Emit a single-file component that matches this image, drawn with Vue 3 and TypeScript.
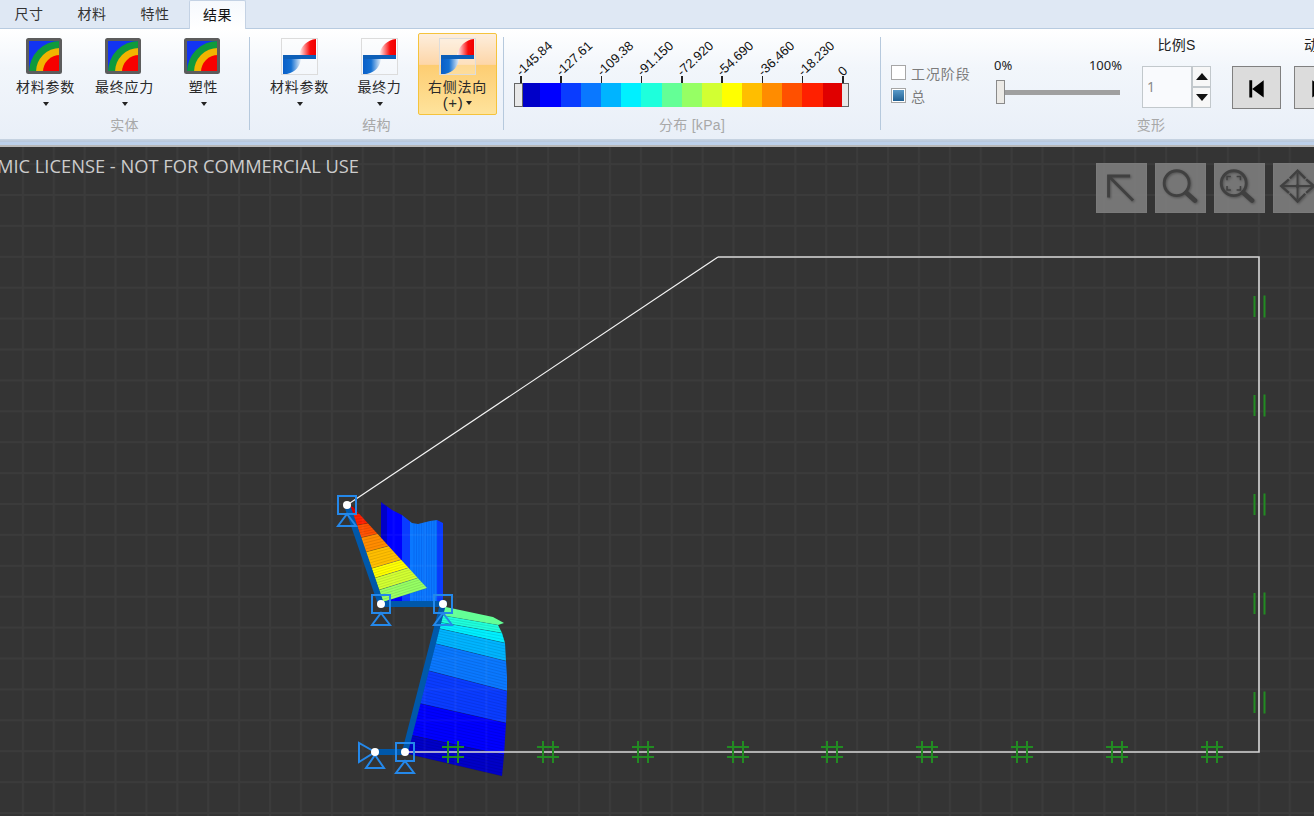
<script setup lang="ts">
type P = [number, number]
interface Band { l1: P; r1: P; l2: P; r2: P; color: string; extra?: P[] }

const tabs = ['尺寸', '材料', '特性', '结果']
const solidButtons = ['材料参数', '最终应力', '塑性']

const scaleColors = ['#0000c8', '#0000ff', '#0a3cff', '#0a78ff', '#00b4ff', '#00f0ff', '#1effdc', '#64ff96', '#96ff64', '#d2ff32', '#ffff00', '#ffbe00', '#ff8c00', '#ff5000', '#ff2000', '#e00000']
const scaleWidths = [17.3, 20.3, 20.4, 20, 20, 20.3, 20.3, 20, 20, 20.4, 20, 20.3, 20, 20, 20.3, 19.7]
const scaleTicks = ['-145.84', '-127.61', '-109.38', '-91.150', '-72.920', '-54.690', '-36.460', '-18.230', '0']

const pts = (a: P[]) => a.map((p) => p.join(',')).join(' ')
const lerp = (a: P, b: P, t: number): P => [a[0] + (b[0] - a[0]) * t, a[1] + (b[1] - a[1]) * t]

function stripes(bands: Band[], step: number) {
  const out: { a: P; b: P }[] = []
  for (const band of bands) {
    const len = Math.hypot(band.r2[0] - band.r1[0], band.r2[1] - band.r1[1])
    const n = Math.max(1, Math.round(len / step))
    for (let i = 0; i <= n; i++) {
      out.push({ a: lerp(band.l1, band.l2, i / n), b: lerp(band.r1, band.r2, i / n) })
    }
  }
  return out
}

const upperColors = ['#e00000', '#ff2000', '#ff5000', '#ff8c00', '#ffbe00', '#ffff00', '#d2ff32', '#96ff64']
const upperStops = [0, 0.08, 0.2, 0.33, 0.48, 0.65, 0.75, 0.875, 1]
const upperLeft = (t: number) => lerp([350, 506], [383, 602], t)
const upperRight = (t: number) => lerp([353, 507], [427, 588], t)
const upperBands: Band[] = upperColors.map((color, i) => ({
  color,
  l1: upperLeft(upperStops[i]),
  r1: upperRight(upperStops[i]),
  l2: upperLeft(upperStops[i + 1]),
  r2: upperRight(upperStops[i + 1]),
}))

const lowerBands: Band[] = [
  { color: '#64ff96', l1: [441, 606], r1: [493, 617], l2: [440, 615], r2: [498, 625], extra: [[504, 623]] },
  { color: '#1effdc', l1: [440, 615], r1: [498, 625], l2: [438.4, 622], r2: [502, 633] },
  { color: '#00f0ff', l1: [438.4, 622], r1: [502, 633], l2: [437, 628], r2: [505, 643] },
  { color: '#00b4ff', l1: [437, 628], r1: [505, 643], l2: [433, 643], r2: [506, 661] },
  { color: '#0a78ff', l1: [433, 643], r1: [506, 661], l2: [426, 670], r2: [507, 691], extra: [[507, 677]] },
  { color: '#0a3cff', l1: [426, 670], r1: [507, 691], l2: [418, 703], r2: [506, 723] },
  { color: '#0000ff', l1: [418, 703], r1: [506, 723], l2: [410, 735], r2: [504, 755] },
  { color: '#0000c8', l1: [410, 735], r1: [504, 755], l2: [408, 754], r2: [502, 776] },
]

const bandPoly = (b: Band) => pts([b.l1, b.r1, ...(b.extra ?? []), b.r2, b.l2])
const upperStripes = stripes(upperBands, 3)
const lowerStripes = stripes(lowerBands.slice(1), 3)

const backStrips = [
  { color: '#0000c8', x: 381, w: 6 },
  { color: '#0000ff', x: 387, w: 15 },
  { color: '#0a3cff', x: 402, w: 8 },
  { color: '#0a78ff', x: 410, w: 27 },
  { color: '#0a3cff', x: 437, w: 6 },
]
const backOutline: P[] = [[381, 502], [392, 510], [402, 515], [412, 523], [418, 524], [430, 521], [437, 520], [443, 523], [443, 602], [381, 602]]
const backLines = Array.from({ length: 11 }, (_, i) => 414 + i * 2.5)

const hashX = [453, 548, 643, 738, 832, 927, 1022, 1117, 1212]
const pairY = [306.5, 405.5, 504.5, 603.5, 702.5]
const nodes: P[] = [[347, 505], [381, 604], [443, 604], [405, 752]]
</script>

<template>
  <div class="app">
    <nav class="tabs">
      <div v-for="(t, i) in tabs" :key="t" class="tab" :class="{ active: i === 3 }">{{ t }}</div>
    </nav>

    <section class="ribbon">
      <div class="group group-solid">
        <div class="group-body">
          <div v-for="b in solidButtons" :key="b" class="rbtn">
            <svg class="ico ico-solid" viewBox="0 0 36 36" width="36" height="36">
              <rect x="1.5" y="1.5" width="33" height="33" fill="#1234f2" />
              <clipPath id="clipSolid"><rect x="1.5" y="1.5" width="33" height="33" /></clipPath>
              <g clip-path="url(#clipSolid)">
                <circle cx="34" cy="34" r="31" fill="#0f9a3c" />
                <circle cx="34" cy="34" r="24" fill="#f2b400" />
                <circle cx="34" cy="34" r="17" fill="#f70000" />
              </g>
              <rect x="1.5" y="1.5" width="33" height="33" fill="none" stroke="#5c5c5c" stroke-width="3" rx="1" />
            </svg>
            <span class="rlabel">{{ b }}</span>
            <i class="caret"></i>
          </div>
        </div>
        <div class="group-label">实体</div>
      </div>
      <div class="sep"></div>

      <div class="group group-struct">
        <div class="group-body">
          <div v-for="(b, i) in ['材料参数', '最终力', '右侧法向']" :key="b" class="rbtn" :class="{ hot: i === 2 }">
            <svg class="ico" viewBox="0 0 37 37" width="37" height="37">
              <defs>
                <linearGradient id="gRed" x1="0" x2="1" y1="0" y2="0">
                  <stop offset="0" stop-color="#fff" />
                  <stop offset="0.65" stop-color="#fa0a0a" />
                  <stop offset="1" stop-color="#f00000" />
                </linearGradient>
                <linearGradient id="gBlue" x1="0" x2="1" y1="0" y2="0">
                  <stop offset="0" stop-color="#0a5fc8" />
                  <stop offset="0.45" stop-color="#1470d2" />
                  <stop offset="1" stop-color="#e8f0f8" />
                </linearGradient>
              </defs>
              <rect x="0.5" y="0.5" width="36" height="36" fill="#fff" fill-opacity="0.25" stroke="#dcdcdc" />
              <path d="M18 17C20 8 26 2 35 1V17Z" fill="url(#gRed)" />
              <path d="M2 21H20C19 28 15 34 6 36H2Z" fill="url(#gBlue)" />
              <rect x="2" y="17" width="33" height="4" fill="#0d5fb8" />
            </svg>
            <span class="rlabel">{{ b }}</span>
            <span v-if="i === 2" class="rlabel plus">(+)<i class="caret inline"></i></span>
            <i v-else class="caret"></i>
          </div>
        </div>
        <div class="group-label">结构</div>
      </div>
      <div class="sep"></div>

      <div class="group group-scale">
        <div class="scale">
          <i class="handle"></i>
          <div class="bar">
            <i v-for="(c, i) in scaleColors" :key="c" class="seg" :style="{ background: c, width: scaleWidths[i] + 'px' }"></i>
            <div
              v-for="(t, i) in scaleTicks"
              :key="t"
              class="tick"
              :style="{ left: i * 40.25 - 3 + 'px' }"
            >
              <span class="tick-text">{{ t }}</span>
            </div>
          </div>
          <i class="handle"></i>
        </div>
        <div class="group-label">分布 [kPa]</div>
      </div>
      <div class="sep"></div>

      <div class="group group-deform">
        <div class="deform-body">
          <div class="checks">
            <label class="check"><i class="box"></i>工况阶段</label>
            <label class="check"><i class="box on"></i>总</label>
          </div>
          <div class="slider">
            <div class="slider-labels"><span>0%</span><span>100%</span></div>
            <div class="track"><i class="thumb"></i></div>
          </div>
          <div class="spin-col">
            <div class="col-title">比例S</div>
            <div class="spin">
              <div class="spin-input">1</div>
              <div class="spin-btns">
                <div class="spin-btn"><svg width="12" height="7" viewBox="0 0 12 7"><path d="M6 0L12 7H0Z" fill="#111" /></svg></div>
                <div class="spin-btn"><svg width="12" height="7" viewBox="0 0 12 7"><path d="M0 0H12L6 7Z" fill="#111" /></svg></div>
              </div>
            </div>
          </div>
          <div class="anim-col">
            <div class="col-title anim-title">动画</div>
            <div class="anim-btns">
              <div class="anim-btn"><svg width="49" height="43" viewBox="0 0 49 43"><path d="M17 14H20V32H17ZM20 23L32 14V32Z" fill="#000" /></svg></div>
              <div class="anim-btn"><svg width="49" height="43" viewBox="0 0 49 43"><path d="M18 14L31 23L18 32Z" fill="#000" /></svg></div>
            </div>
          </div>
        </div>
        <div class="group-label">变形</div>
      </div>
    </section>

    <div class="divider"></div>

    <main class="canvas">
      <svg class="scene" width="1314" height="669" viewBox="0 147 1314 669">
        <defs>
          <pattern id="grid" width="30.9" height="30.9" patternUnits="userSpaceOnUse" x="21.8" y="8.6">
            <path d="M0 1H30.9M1 0V30.9" fill="none" stroke="#fff" stroke-opacity="0.035" stroke-width="2" />
          </pattern>
          <clipPath id="backClip"><polygon :points="pts(backOutline)" /></clipPath>
        </defs>
        <rect x="0" y="147" width="1314" height="669" fill="#343434" />

        <!-- stress diagrams -->
        <g clip-path="url(#backClip)">
          <rect v-for="s in backStrips" :key="s.x" :x="s.x" y="500" :width="s.w" height="104" :fill="s.color" />
          <line v-for="x in backLines" :key="x" :x1="x" :x2="x" y1="515" y2="604" stroke="#003cc8" stroke-opacity="0.35" stroke-width="0.7" />
        </g>
        <polygon v-for="b in upperBands" :key="b.color" :points="bandPoly(b)" :fill="b.color" />
        <line v-for="(s, i) in upperStripes" :key="'u' + i" :x1="s.a[0]" :y1="s.a[1]" :x2="s.b[0]" :y2="s.b[1]" stroke="#000" stroke-opacity="0.14" stroke-width="0.7" />
        <polygon v-for="b in lowerBands" :key="b.color" :points="bandPoly(b)" :fill="b.color" />
        <line v-for="(s, i) in lowerStripes" :key="'l' + i" :x1="s.a[0]" :y1="s.a[1]" :x2="s.b[0]" :y2="s.b[1]" stroke="#000" stroke-opacity="0.14" stroke-width="0.7" />

        <rect x="0" y="147" width="1314" height="669" fill="url(#grid)" />

        <!-- model outline -->
        <line x1="347" y1="505" x2="718" y2="257" stroke="#f4f4f4" stroke-width="1.2" />
        <polyline points="718,257 1259,257 1259,752 405,752" fill="none" stroke="#d8d8d8" stroke-width="1.6" />

        <!-- structural members -->
        <polyline points="347,505 381,604 443,604 405,752 375,752" fill="none" stroke="#0058aa" stroke-width="6" stroke-linejoin="miter" />

        <!-- fixity marks -->
        <g stroke="#228b22" stroke-width="2" fill="none">
          <g v-for="x in hashX" :key="x">
            <path :d="`M${x - 5} 741V763M${x + 5} 741V763M${x - 11} 747H${x + 11}M${x - 11} 757H${x + 11}`" />
          </g>
          <g v-for="y in pairY" :key="y">
            <path :d="`M1254.5 ${y - 10.5}V${y + 10.5}M1264.5 ${y - 11}V${y + 11}`" />
          </g>
        </g>

        <!-- supports -->
        <g fill="none" stroke="#2488ea" stroke-width="2">
          <g v-for="n in nodes" :key="n[0]">
            <rect :x="n[0] - 9" :y="n[1] - 9" width="18" height="18" />
            <path :d="`M${n[0]} ${n[1] + 9}L${n[0] + 9} ${n[1] + 21}H${n[0] - 9}Z`" />
          </g>
          <path d="M375 752L359 743V762Z" />
          <path d="M375 755L384 768H366Z" />
        </g>
        <g fill="#fff">
          <circle v-for="n in nodes" :key="'d' + n[0]" :cx="n[0]" :cy="n[1]" r="4" />
          <circle cx="375" cy="752" r="4" />
        </g>
      </svg>

      <div class="license">MIC LICENSE - NOT FOR COMMERCIAL USE</div>

      <div class="nav">
        <div class="nav-btn">
          <svg width="49" height="48" viewBox="0 0 50 50"><path d="M11.5 35V12.5H34M12 13L37 38" fill="none" stroke="#404040" stroke-width="3" /></svg>
        </div>
        <div class="nav-btn">
          <svg width="49" height="48" viewBox="0 0 50 50"><circle cx="21" cy="20" r="13" fill="none" stroke="#404040" stroke-width="3" /><path d="M31 30L40 38" stroke="#404040" stroke-width="5" stroke-linecap="round" /></svg>
        </div>
        <div class="nav-btn">
          <svg width="49" height="48" viewBox="0 0 50 50"><circle cx="19" cy="20" r="13" fill="none" stroke="#404040" stroke-width="3" /><path d="M12 17V13H16M22 13H26V17M26 23V27H22M16 27H12V23" fill="none" stroke="#404040" stroke-width="1.6" /><path d="M29 30L38 38" stroke="#404040" stroke-width="5" stroke-linecap="round" /></svg>
        </div>
        <div class="nav-btn">
          <svg width="49" height="48" viewBox="0 0 50 50"><path d="M16 15L24 7L32 15M32 31L24 39L16 31M15 16L7 23L15 30M33 16L41 23L33 30" fill="none" stroke="#404040" stroke-width="2.5" /><path d="M24 9V37M9 23H39" stroke="#404040" stroke-width="2" /><circle cx="24" cy="23" r="2" fill="#404040" /></svg>
        </div>
      </div>
    </main>
  </div>
</template>

<style scoped>
.app {
  position: relative;
  width: 1314px;
  height: 816px;
  overflow: hidden;
  display: flex;
  flex-direction: column;
  font-family: "Liberation Sans", "Noto Sans CJK SC", sans-serif;
  font-size: 14px;
  color: #222;
  background: #333;
}
.tabs {
  flex: none;
  height: 29px;
  box-sizing: border-box;
  padding-left: 1px;
  display: flex;
  gap: 7px;
  background: #dfe8f4;
  border-bottom: 1px solid #b8cbe0;
}
.tab {
  width: 56px;
  height: 28px;
  box-sizing: border-box;
  text-align: center;
  line-height: 29px;
  font-size: 14px;
  color: #333;
  letter-spacing: 0.5px;
}
.tab.active {
  color: #111;
  width: 57px;
  margin-left: -1px;
  background: linear-gradient(#f6f9fd, #fff);
  border: 1px solid #c4d2e4;
  border-bottom: none;
  border-radius: 2px 2px 0 0;
  line-height: 28px;
  height: 29px;
  position: relative;
  z-index: 1;
}
.ribbon {
  flex: none;
  height: 110px;
  display: flex;
  background: linear-gradient(#ffffff, #f2f6fb 35%, #e9eff8);
}
.sep {
  flex: none;
  width: 1px;
  height: 93px;
  margin-top: 8px;
  background: #b6c9dd;
}
.group {
  flex: none;
  display: flex;
  flex-direction: column;
  position: relative;
}
.group-solid { width: 249px; padding-left: 6px; box-sizing: border-box; }
.group-struct { width: 253px; padding-left: 10px; box-sizing: border-box; }
.group-scale { width: 376px; padding-left: 10px; box-sizing: border-box; }
.group-deform { width: 540px; padding-left: 10px; box-sizing: border-box; }
.group-body {
  display: flex;
  height: 82px;
  margin-top: 4px;
}
.group-label {
  position: absolute;
  left: 0;
  right: 0;
  top: 86px;
  height: 20px;
  line-height: 20px;
  text-align: center;
  color: #a8a8a8;
  font-size: 14px;
  letter-spacing: 0.3px;
}
.rbtn {
  flex: none;
  width: 79px;
  height: 82px;
  box-sizing: border-box;
  border: 1px solid transparent;
  border-radius: 2px;
  padding-top: 4px;
  display: flex;
  flex-direction: column;
  align-items: center;
}
.group-struct .rbtn:nth-child(2) { margin-left: 1px; }
.group-struct .rbtn:nth-child(3) { margin-left: -1px; }
.rbtn.hot {
  border-color: #f5c33c;
  background: linear-gradient(#fdeedd, #fdd6a8 38%, #fdcd72 39%, #fee39c);
}
.ico { flex: none; display: block; }
.ico-solid { margin-right: 3px; }
.rlabel {
  margin-top: 3px;
  line-height: 20px;
  height: 20px;
  letter-spacing: 0.7px;
  white-space: nowrap;
  color: #2a2a2a;
}
.group-struct .rlabel { margin-top: 2px; }
.group-struct .hot .rlabel {
  margin-top: 4px;
  height: 16px;
  line-height: 16px;
}
.group-struct .hot .rlabel.plus {
  margin-top: 0;
  letter-spacing: 0.6px;
  font-size: 15px;
  display: flex;
  align-items: center;
  gap: 3px;
}
.caret {
  display: block;
  width: 0;
  height: 0;
  margin-top: 5px;
  border-left: 3px solid transparent;
  border-right: 3px solid transparent;
  border-top: 4px solid #222;
}
.caret.inline { margin-top: 0; }
.scale {
  position: relative;
  display: flex;
  margin-top: 54px;
  height: 24px;
}
.handle {
  flex: none;
  width: 9px;
  height: 24px;
  box-sizing: border-box;
  background: #e8e8e8;
  border: 1px solid #666;
}
.bar {
  position: relative;
  display: flex;
  width: 317px;
  height: 24px;
}
.seg { flex: none; display: block; height: 24px; }
.tick {
  position: absolute;
  top: -7px;
  width: 1.5px;
  height: 7px;
  background: #222;
}
.tick-text {
  position: absolute;
  left: 3px;
  bottom: 4px;
  font-family: "Liberation Sans", sans-serif;
  font-size: 13px;
  line-height: 14px;
  color: #111;
  white-space: nowrap;
  transform-origin: 0 100%;
  transform: rotate(-43deg);
}
.deform-body {
  display: flex;
  height: 80px;
  margin-top: 7px;
}
.checks {
  width: 103px;
  flex: none;
  padding-top: 25px;
}
.check {
  display: flex;
  align-items: center;
  gap: 5px;
  height: 23px;
  color: #7c7c7c;
  letter-spacing: 0.9px;
}
.box {
  flex: none;
  width: 15px;
  height: 15px;
  box-sizing: border-box;
  border: 1px solid #a6a6a6;
  background: #fff;
}
.box.on {
  border: 2px solid #fff;
  outline: 1px solid #a6a6a6;
  outline-offset: -1px;
  padding: 0;
  background: linear-gradient(#5a9ac8, #1f5f92);
  background-clip: padding-box;
}
.slider {
  flex: none;
  width: 128px;
  padding-top: 20px;
}
.slider-labels {
  display: flex;
  justify-content: space-between;
  font-family: "Noto Sans", sans-serif;
  font-size: 13px;
  line-height: 18px;
  color: #222;
}
.track {
  position: relative;
  margin: 16px 2px 0 10px;
  height: 5px;
  background: #a0a0a0;
}
.thumb {
  position: absolute;
  left: -8px;
  top: -10px;
  width: 9px;
  height: 24px;
  box-sizing: border-box;
  background: #eceae6;
  border: 1px solid #8a8a8a;
}
.spin-col {
  flex: none;
  width: 69px;
  margin-left: 20px;
}
.col-title {
  height: 20px;
  line-height: 20px;
  margin-top: -1px;
  text-align: center;
  white-space: nowrap;
  color: #222;
  letter-spacing: 0.3px;
}
.spin {
  display: flex;
  margin-top: 11px;
  height: 42px;
}
.spin-input {
  width: 50px;
  box-sizing: border-box;
  border: 1px solid #c2c8cc;
  background: #f9fafd;
  color: #8a8a8a;
  padding-left: 4px;
  line-height: 40px;
  font-family: "Noto Sans", sans-serif;
}
.spin-btns { width: 19px; display: flex; flex-direction: column; }
.spin-btn {
  height: 21px;
  box-sizing: border-box;
  border: 1px solid #c2c8cc;
  background: #f7f7f7;
  display: flex;
  align-items: center;
  justify-content: center;
}
.anim-col {
  flex: none;
  margin-left: 21px;
}
.anim-title {
  text-align: left;
  padding-left: 72px;
}
.anim-btns { display: flex; gap: 13px; margin-top: 11px; }
.anim-btn {
  width: 49px;
  height: 43px;
  box-sizing: border-box;
  border: 1px solid #808080;
  background: #dcdcdc;
  display: flex;
  align-items: center;
  justify-content: center;
}
.divider {
  flex: none;
  height: 8px;
  background: linear-gradient(#c8d4e2 0, #b6c6da 37%, #bcd0ea 38%, #bcd0ea 72%, #b8b8b8 73%);
}
.canvas {
  position: relative;
  flex: 1;
  overflow: hidden;
}
.scene { display: block; }
.license {
  position: absolute;
  left: -3px;
  top: 6px;
  font-family: "Open Sans", "Noto Sans", sans-serif;
  font-size: 18.3px;
  line-height: 26px;
  color: #cccccc;
  white-space: nowrap;
}
.nav {
  position: absolute;
  left: 1096px;
  top: 16px;
  display: flex;
  gap: 8px;
}
.nav-btn {
  flex: none;
  width: 51px;
  height: 50px;
  box-sizing: border-box;
  border: 1px solid #7a7a7a;
  background: rgba(140, 140, 140, 0.75);
}
.nav-btn svg { display: block; filter: drop-shadow(1px 1px 1px rgba(0, 0, 0, 0.3)); }
</style>
